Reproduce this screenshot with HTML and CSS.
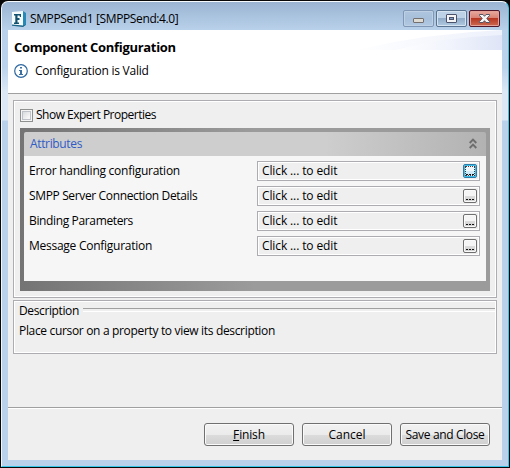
FILE: index.html
```html
<!DOCTYPE html>
<html lang="en">
<head>
<meta charset="utf-8">
<title>SMPPSend1 [SMPPSend:4.0]</title>
<link rel="stylesheet" href="styles.css">
</head>
<body>
<div class="window">
  <div class="titlebar">
    <svg class="app-icon" width="16" height="16" viewBox="0 0 16 16"><path d="M1 1L12 0V15L1 14Z" fill="#f5fafc"/><path d="M12 0L15 2V14L12 15.500Z" fill="#2789b5"/><path d="M1 13.500L12 14.500L15 13.500L12 16L1 14.700Z" fill="#1b6488"/><path d="M3 3H10V6H9L8.500 4.500H6.500V7H8.500V9H6.500V11.500H8V13H3V11.500H4.300V4.500H3Z" fill="#12516f"/></svg>
    <span class="title">SMPPSend1 [SMPPSend:4.0]</span>
    <div class="controls">
      <span class="control minimize"><svg width="31" height="17"><rect x="10.500" y="8.500" width="10" height="4" rx=".5" fill="#dedbd5" stroke="#73706f"/></svg></span>
      <span class="control"><svg width="31" height="17"><rect x="10.500" y="4.500" width="10" height="8" rx=".5" fill="#f4f4f4" stroke="#4b526c"/><rect x="13.500" y="7.500" width="4" height="2" fill="#7f9fc4" stroke="#4b526c"/></svg></span>
      <span class="control close"><svg width="31" height="17"><path d="M10.500 4.500H14L15.500 6.300L17 4.500H20.500V5.500L17.800 8.500L20.500 11.500V12.500H17L15.500 10.700L14 12.500H10.500V11.500L13.200 8.500L10.500 5.500Z" fill="#f5f5f5" stroke="#535666"/></svg></span>
    </div>
  </div>
  <main class="content">
    <header class="banner">
      <svg class="sweep" width="147" height="20" viewBox="0 0 147 20">
        <defs><linearGradient id="a"><stop offset="0" stop-color="#fff"/><stop offset=".5" stop-color="#f1f4fc"/><stop offset="1" stop-color="#dfe5f7"/></linearGradient><linearGradient id="b"><stop offset="0" stop-color="#fff"/><stop offset="1" stop-color="#edf1fb"/></linearGradient></defs>
        <path d="M0 20Q75 3 147 0V20Z" fill="url(#b)"/><path d="M40 20Q90 7 147 5V20Z" fill="url(#a)"/>
      </svg>
      <h1>Component Configuration</h1>
      <div class="status"><svg width="14" height="14"><circle cx="7" cy="7" r="6.300" fill="#fff" stroke="#2d68a0" stroke-width="1.200"/><path d="M6 3H8V4.500H6ZM5 6H8V10H9V11H5V10H6V7H5Z" fill="#3b70a3"/></svg><span class="valid">Configuration is Valid</span></div>
    </header>
    <section class="group properties">
      <label class="expert"><span class="checkbox"></span><span class="expert-text">Show Expert Properties</span></label>
      <div class="attributes">
        <div class="attributes-head"><span class="attr-text">Attributes</span><svg width="8" height="12"><path d="M.7 5L4 1.700L7.300 5M.7 10L4 6.700L7.300 10" fill="none" stroke="#6d6d6d" stroke-width="1.900"/></svg></div>
        <div class="rows">
          <div class="row"><span class="l1">Error handling configuration</span><div class="field"><span class="edit">Click ... to edit</span><span class="more focused"><i></i><i></i><i></i></span></div></div>
          <div class="row"><span class="l2">SMPP Server Connection Details</span><div class="field"><span class="edit">Click ... to edit</span><span class="more"><i></i><i></i><i></i></span></div></div>
          <div class="row"><span class="l3">Binding Parameters</span><div class="field"><span class="edit">Click ... to edit</span><span class="more"><i></i><i></i><i></i></span></div></div>
          <div class="row"><span class="l4">Message Configuration</span><div class="field"><span class="edit">Click ... to edit</span><span class="more"><i></i><i></i><i></i></span></div></div>
        </div>
      </div>
    </section>
    <section class="group description">
      <div class="legend"><span class="desc-title">Description</span></div>
      <p><span class="desc-text">Place cursor on a property to view its description</span></p>
    </section>
    <footer>
      <button><span class="finish"><u>F</u>inish</span></button><button><span class="cancel">Cancel</span></button><button><span class="save">Save and Close</span></button>
    </footer>
  </main>
</div>
</body>
</html>
```
FILE: styles.css
```css
* { box-sizing: border-box; }
body { margin: 0; background: #080808; font: 12px/16px "Open Sans", "Noto Sans", sans-serif; color: #000; overflow: hidden; }
svg { display: block; flex: none; }
span { white-space: nowrap; }
.window { width: 508px; height: 466px; margin: 1px; padding: 0 6px 6px; border: 1px solid #35c6e9; border-top-color: #f6fafd; border-left-color: #eef5fb; border-radius: 7px 7px 0 0; background: linear-gradient(#9ab4d2, #b9d1ea 28px, #bbd3ec 65px, #dce8f5 90px, #dce8f5 118px, #b9d1ea 119px); }
.titlebar { height: 28px; display: flex; align-items: flex-start; padding: 8px 2px 0 3px; }
.app-icon { margin-top: 1px; }
.title { margin: 1px 0 0 3px; letter-spacing: -.38px; }
.controls { display: flex; gap: 2px; margin-left: auto; }
.control { width: 31px; height: 17px; border: 1px solid #5a7390; border-radius: 2px; box-shadow: inset 0 0 0 1px #d5e3f1; background: linear-gradient(#bdd1e7 0 47%, #91abc8 50%, #b1cae2); }
.control svg { margin: -1px; }
.minimize { border-color: #8098b6; box-shadow: inset 0 0 0 1px #bed0e4; background: linear-gradient(#afc5df, #a7bfda 50%, #b1c9e2); }
.close { border-color: #50182a; box-shadow: inset 0 0 0 1px #e4a198; background: linear-gradient(#e9aaa0, #d98273 47%, #b83722 50%, #cb6a51); }
.content { height: 430px; background: #efefef; }
.banner { position: relative; height: 64px; padding: 9px 6px 0; background: #fff; border-bottom: 1px solid #a0a0a0; }
.sweep { position: absolute; top: 0; right: 0; }
h1 { margin: 0; font: bold 13px/16px "Open Sans", "Noto Sans", sans-serif; letter-spacing: -.31px; }
.status { display: flex; margin-top: 8px; gap: 7px; align-items: center; }
.valid { letter-spacing: -.23px; }
.group { width: 484px; margin-left: 5px; border: 1px solid #acacb1; box-shadow: inset 0 0 0 1px #fff; }
.properties { height: 198px; margin-top: 6px; padding: 6px; }
.expert { display: flex; gap: 3px; height: 16px; align-items: center; }
.expert-text { letter-spacing: -.5px; }
.checkbox { width: 13px; height: 13px; border: 1px solid #8e8f8f; box-shadow: inset 0 0 0 1px #f4f4f4, inset 0 0 0 2px #bfc3c9; background: linear-gradient(135deg, #cdd1d6, #f7f7f7 70%); }
.attributes { width: 470px; height: 163px; margin-top: 5px; padding: 4px 4px 10px; background: linear-gradient(90deg, #747474, #9b9b9b 50%); }
.attributes-head { height: 24px; padding: 0 9px 0 6px; display: flex; align-items: center; justify-content: space-between; color: #315bc5; background: linear-gradient(90deg, #cecece 65%, #b2b2b2); border-radius: 2px 2px 0 0; }
.attr-text { letter-spacing: -.35px; }
.rows { height: 125px; background: #f6f6f6; padding: 5px 6px 0 5px; display: grid; gap: 5px; align-content: start; }
.row { height: 20px; display: flex; align-items: center; justify-content: space-between; }
.l1, .l4 { letter-spacing: -.26px; }
.l2, .l3 { letter-spacing: -.36px; }
.field { width: 223px; height: 20px; padding: 0 2px 0 4px; display: flex; align-items: center; justify-content: space-between; background: #efefef; border: 1px solid #acacb1; box-shadow: inset 0 0 0 1px #fff; }
.edit { letter-spacing: -.12px; }
.more { width: 14px; height: 14px; border: 1px solid #707070; border-radius: 2px; background: linear-gradient(#f5f5f5 50%, #dcdcdc 51%, #cecece); display: flex; justify-content: center; align-items: flex-end; gap: 1px; padding-bottom: 2px; box-shadow: inset 0 0 0 1px #fafafa; }
.more i { width: 2px; height: 1px; background: #111; }
.more.focused { border-color: #2c7ba8; background: linear-gradient(#eef7fc 50%, #d4ecf8 51%, #bee5f6); box-shadow: inset 0 0 0 1px #39c1ec; position: relative; }
.focused::after { content: ""; position: absolute; inset: 1px; border: 1px dotted #5c3030; }
.description { height: 54px; margin-top: 2px; padding: 1px 1px 0 5px; }
.legend { height: 17px; display: flex; align-items: center; gap: 4px; }
.legend::after { content: ""; flex: 1; height: 2px; border-top: 1px solid #a0a0a0; border-bottom: 1px solid #fff; margin-bottom: 1px; }
.desc-title { letter-spacing: -.38px; }
.desc-text { letter-spacing: -.33px; }
p { margin: 4px 0 0; }
footer { height: 53px; margin-top: 53px; padding: 15px 12px 0 0; display: flex; justify-content: flex-end; gap: 8px; border-top: 1px solid #a0a0a0; box-shadow: inset 0 1px #fff; }
button { width: 90px; height: 23px; padding: 0; font: inherit; color: #000; border: 1px solid #707070; border-radius: 3px; box-shadow: inset 0 0 0 1px #fafafa; background: linear-gradient(#f2f2f2, #ebebeb 50%, #dcdcdc 51%, #cfcfcf); }
.finish { letter-spacing: -.15px; }
.save { letter-spacing: -.36px; }
```
